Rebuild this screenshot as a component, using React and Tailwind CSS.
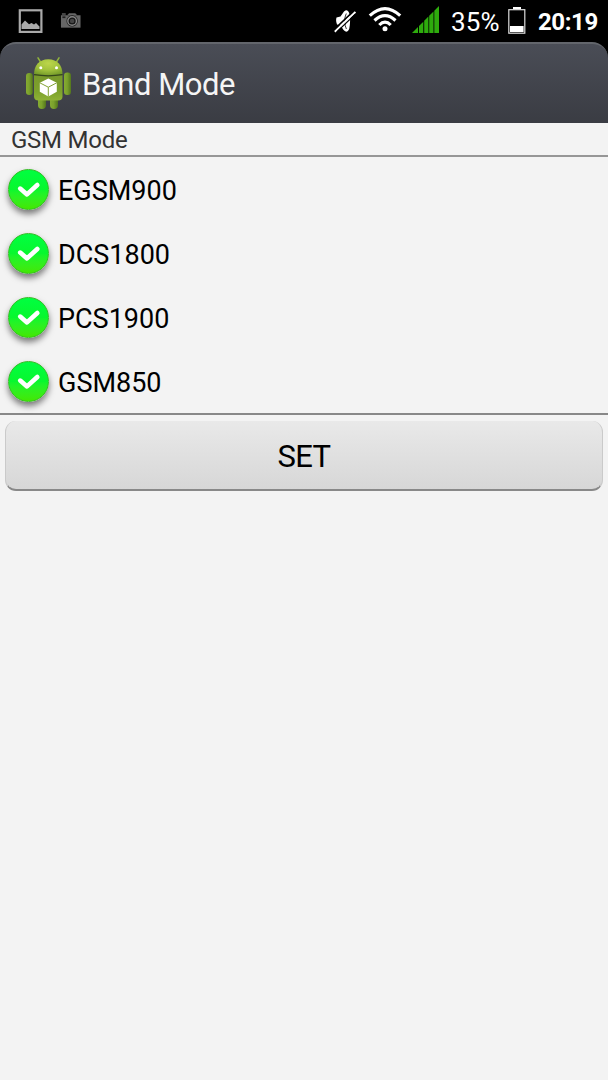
const BANDS = ['EGSM900', 'DCS1800', 'PCS1900', 'GSM850'];

function PictureIcon() {
  return (
    <svg width="25" height="25" viewBox="0 0 25 25" className="shrink-0">
      <rect x="1.8" y="1.3" width="21.6" height="21.6" fill="none" stroke="#aaa" strokeWidth="2.2" />
      <path d="M3.5 20V15.5L7 11.5L11 15.2L13.5 14L16 15.5L18 14L21.5 17.5V20Z" fill="#aaa" />
    </svg>
  );
}

function CameraIcon() {
  return (
    <svg width="21" height="17" viewBox="0 0 22 17" className="shrink-0">
      <path d="M1 3H21.5V16H1Z" fill="#666" />
      <path d="M2 1H6V2.4H2Z" fill="#666" />
      <path d="M7.5 3L9.5 1H16L18 3Z" fill="#666" />
      <rect x="2.5" y="4.2" width="3.2" height="1.8" fill="#222" />
      <circle cx="12.7" cy="9" r="5.9" fill="#161616" />
      <circle cx="12.7" cy="9" r="4.5" fill="none" stroke="#858585" strokeWidth="1.5" />
      <circle cx="12.7" cy="9" r="2.4" fill="#444" />
    </svg>
  );
}

function MuteIcon() {
  return (
    <svg width="22" height="24" viewBox="0 0 22 24" className="shrink-0">
      <path d="M2.5 8.5L6.5 7.5L10 2.5Q13.5 -0.8 15.2 4Q17 11 15.2 20Q13.2 24.8 9.6 21L6.5 16.5L3 15.5Q1.5 12 2.5 8.5Z" fill="#fff" />
      <path d="M12.3 4.5Q10.6 8 10.7 12Q10.8 17 12.4 20" fill="none" stroke="#000" strokeWidth="0.8" />
      <path d="M0 20.6L21 0.8" stroke="#000" strokeWidth="1.6" />
      <path d="M0.8 22.8L21.4 3" stroke="#fff" strokeWidth="1.9" />
      <path d="M2.8 22.9L21.6 5" stroke="#000" strokeWidth="1.1" />
    </svg>
  );
}

function WifiIcon() {
  return (
    <svg width="34" height="26" viewBox="0 0 34 26" className="shrink-0" fill="none" stroke="#fff" strokeWidth="3.2">
      <path d="M1.8 9.7Q17 -4.5 32.2 9.7" />
      <path d="M6.5 14.5Q17 4.9 27.5 14.5" />
      <path d="M11.3 19Q17 13.2 22.7 19" />
      <circle cx="17" cy="22.8" r="2.5" fill="#fff" stroke="none" />
    </svg>
  );
}

function SignalIcon() {
  return (
    <svg width="27" height="27" viewBox="0 0 27 27" className="shrink-0" fill="#2eac0d">
      <path d="M0 27L6 21V27Z" />
      <path d="M7 27V20L11.3 15.7V27Z" />
      <path d="M12.2 27V14.8L16.4 10.6V27Z" />
      <path d="M17.2 27V9.8L21.5 5.5V27Z" />
      <path d="M22.3 27V4.7L27 0V27Z" />
    </svg>
  );
}

function BatteryIcon() {
  return (
    <svg width="18" height="28" viewBox="0 0 18 28" className="shrink-0">
      <path d="M5 1H13V3.5H5Z" fill="#fff" />
      <rect x="0.8" y="3.7" width="16" height="23.5" fill="none" stroke="#ddd" strokeWidth="1.2" />
      <rect x="2" y="20" width="13.6" height="6" fill="#fff" />
    </svg>
  );
}

function AndroidIcon() {
  return (
    <svg width="48" height="54" viewBox="0 0 48 54" className="shrink-0">
      <defs>
        <linearGradient id="limb" x1="0" y1="0" x2="1" y2="0">
          <stop offset="0" stopColor="#86ab32" />
          <stop offset="0.45" stopColor="#7ba22c" />
          <stop offset="1" stopColor="#53761c" />
        </linearGradient>
        <radialGradient id="head" cx="0.5" cy="0.25" r="0.75">
          <stop offset="0" stopColor="#bcd64b" />
          <stop offset="0.55" stopColor="#a1c23c" />
          <stop offset="1" stopColor="#749a2a" />
        </radialGradient>
        <linearGradient id="body" x1="0" y1="0" x2="0" y2="1">
          <stop offset="0" stopColor="#78982c" />
          <stop offset="0.65" stopColor="#7da22c" />
          <stop offset="1" stopColor="#8fb236" />
        </linearGradient>
      </defs>
      <path d="M13 0.8L16.5 6.5M34 0.8L30.5 6.5" stroke="#92b53b" strokeWidth="1.5" strokeLinecap="round" />
      <rect x="13" y="39" width="8" height="13" rx="4" fill="url(#limb)" />
      <rect x="25" y="39" width="8" height="13" rx="4" fill="url(#limb)" />
      <rect x="1" y="16" width="6.8" height="22" rx="3.2" fill="url(#limb)" />
      <rect x="39" y="15.5" width="7" height="22.5" rx="3.2" fill="url(#limb)" />
      <path d="M9 18H37.5V39.5Q37.5 43.5 33 43.5H13.5Q9 43.5 9 39.5Z" fill="url(#body)" />
      <path d="M9 17.5C9 8.5 14 2.2 23.3 2.2S37.5 8.5 37.5 17.5Q23 20 9 17.5Z" fill="url(#head)" />
      <path d="M9 17.7Q23 20 37.5 17.7" fill="none" stroke="#34471a" strokeWidth="1.2" />
      <circle cx="15.8" cy="10.8" r="1.5" fill="#fff" />
      <circle cx="31.5" cy="10.8" r="1.5" fill="#fff" />
      <path d="M23.3 21.5L31.8 25.8V34.8L23.3 39.6L14.8 34.8V25.8Z" fill="#fff" />
      <path d="M14.8 25.8L23.3 30.2L31.8 25.8M23.3 30.2V39.6" fill="none" stroke="#82a234" strokeWidth="1" />
    </svg>
  );
}

function CheckBadge() {
  return (
    <span className="grid size-[41px] shrink-0 place-items-center rounded-full border border-[#35bc23] bg-linear-to-b from-[#00ff40] via-[#08f72e] via-50% to-[#42e800] shadow-[0_4px_6px_rgba(0,0,0,0.5)]">
      <svg width="25" height="19" viewBox="0 0 25 19">
        <path d="M4.2 8.6L11 14.4L21.3 5" fill="none" stroke="#fff" strokeWidth="4.6" strokeLinecap="round" strokeLinejoin="round" />
      </svg>
    </span>
  );
}

function StatusBar() {
  return (
    <div className="flex h-[42px] items-start justify-between bg-black pl-[18px] text-white">
      <div className="flex gap-[17px] pt-[9px]">
        <PictureIcon />
        <div className="pt-[3px]"><CameraIcon /></div>
      </div>
      <div className="flex w-[275px] shrink-0">
        <div className="w-[34px] pl-px pt-[9px]"><MuteIcon /></div>
        <div className="w-[45px] pl-px pt-[6px]"><WifiIcon /></div>
        <div className="w-[38px] pt-[6px]"><SignalIcon /></div>
        <div className="w-[58px] pl-px text-[26px] leading-[44px] tracking-[0.2px]">35%</div>
        <div className="w-[30px] pt-[6px]"><BatteryIcon /></div>
        <div className="text-[24px] font-bold leading-[45px] tracking-[-0.4px]">20:19</div>
      </div>
    </div>
  );
}

export default function App() {
  return (
    <div className="flex h-[1080px] w-[608px] flex-col overflow-hidden bg-[#f3f3f3] font-['Roboto',sans-serif] text-black">
      <StatusBar />
      <div className="bg-black">
        <header className="flex h-[81px] items-center gap-[9px] rounded-t-[16px] border-t-2 border-[#63666c] bg-linear-to-b from-[#4a4d56] to-[#3a3c43] pl-[25px] text-[#f5f5f5]">
          <AndroidIcon />
          <h1 className="pt-[2px] text-[31px] leading-[40px] tracking-[-0.45px]">Band Mode</h1>
        </header>
      </div>
      <h2 className="h-[34px] border-b-2 border-[#969696] pl-[11px] text-[24px] leading-[35px] tracking-[-0.25px] text-[#333]">GSM Mode</h2>
      <ul className="h-[258px] border-b-2 border-[#888]">
        {BANDS.map((band) => (
          <li key={band} className="flex h-16 items-center gap-[9px] pl-[8px]">
            <CheckBadge />
            <span className="pt-[3px] text-[27px] leading-8">{band}</span>
          </li>
        ))}
      </ul>
      <div className="px-[5px] pt-[6px]">
        <button className="h-[70px] w-full rounded-[11px] border-x border-b-2 border-x-[#cacaca] border-b-[#888] bg-linear-to-b from-[#e9e9e9] to-[#d7d7d7] pt-[4px] text-[31px] tracking-[-0.6px]">SET</button>
      </div>
    </div>
  );
}
